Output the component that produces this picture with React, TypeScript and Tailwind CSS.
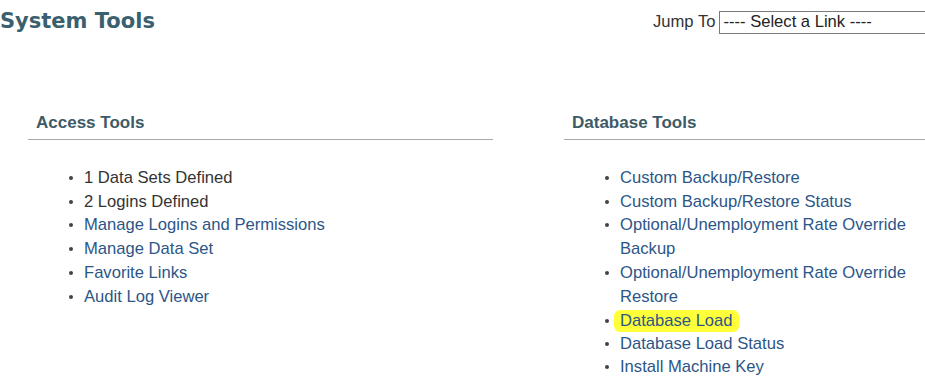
const accessItems = [
  { label: '1 Data Sets Defined', link: false },
  { label: '2 Logins Defined', link: false },
  { label: 'Manage Logins and Permissions', link: true },
  { label: 'Manage Data Set', link: true },
  { label: 'Favorite Links', link: true },
  { label: 'Audit Log Viewer', link: true },
]

const databaseItems = [
  'Custom Backup/Restore',
  'Custom Backup/Restore Status',
  'Optional/Unemployment Rate Override Backup',
  'Optional/Unemployment Rate Override Restore',
  'Database Load',
  'Database Load Status',
  'Install Machine Key',
]

function Section({ title, children }: { title: string; children: React.ReactNode }) {
  return (
    <div>
      <div className="border-b border-[#a9a9a9] pt-[112px] pb-[6px] pl-[8px]">
        <h2 className="text-[17px] leading-[20px] font-bold text-[#3d5b66]">{title}</h2>
      </div>
      <ul className="mt-[26px] pl-[41px]">{children}</ul>
    </div>
  )
}

function Bullet() {
  return (
    <span className="w-[15px] shrink-0 flex justify-start pt-[10px]">
      <span className="w-[4px] h-[4px] rounded-full bg-[#444]" />
    </span>
  )
}

export default function App() {
  return (
    <div
      className="w-[925px] h-[391px] overflow-hidden bg-white"
      style={{ fontFamily: '"Liberation Sans", Arial, sans-serif' }}
    >
      <div className="w-[1040px]">
        {/* Header */}
        <div className="flex items-start pt-[8px]">
          <h1
            className="w-[653px] shrink-0 text-[21px] leading-[26px] font-bold text-[#3a5f6e]"
            style={{ fontFamily: '"DejaVu Sans", Verdana, sans-serif' }}
          >
            System Tools
          </h1>
          <div className="flex items-center gap-[4px] pt-[2px]">
            <span className="text-[16.6px] text-[#333]">Jump To</span>
            <select className="appearance-none w-[240px] h-[23px] border border-[#7a7a7a] bg-white px-[3px] text-[16.6px] leading-[20px] text-[#222]">
              <option>---- Select a Link ----</option>
            </select>
          </div>
        </div>

        {/* Columns */}
        <div className="grid grid-cols-[465px_465px] gap-[71px] pl-[28px] -mt-[34px]">
          <Section title="Access Tools">
            {accessItems.map((item) => (
              <li key={item.label} className="flex text-[16.6px] leading-[23.8px]">
                <Bullet />
                <a className={item.link ? 'text-[#2c5687] cursor-pointer' : 'text-[#333]'}>{item.label}</a>
              </li>
            ))}
          </Section>
          <Section title="Database Tools">
            {databaseItems.map((item) => (
              <li key={item} className="flex text-[16.6px] leading-[23.8px] w-[345px]">
                <Bullet />
                {item === 'Database Load' ? (
                  <a className="text-[#2c5687] cursor-pointer bg-[#ffff3a] rounded-[6px] px-[6px] -ml-[6px] h-[22px] leading-[22px] mt-[1px]">
                    {item}
                  </a>
                ) : (
                  <a className="text-[#2c5687] cursor-pointer">{item}</a>
                )}
              </li>
            ))}
          </Section>
        </div>
      </div>
    </div>
  )
}
